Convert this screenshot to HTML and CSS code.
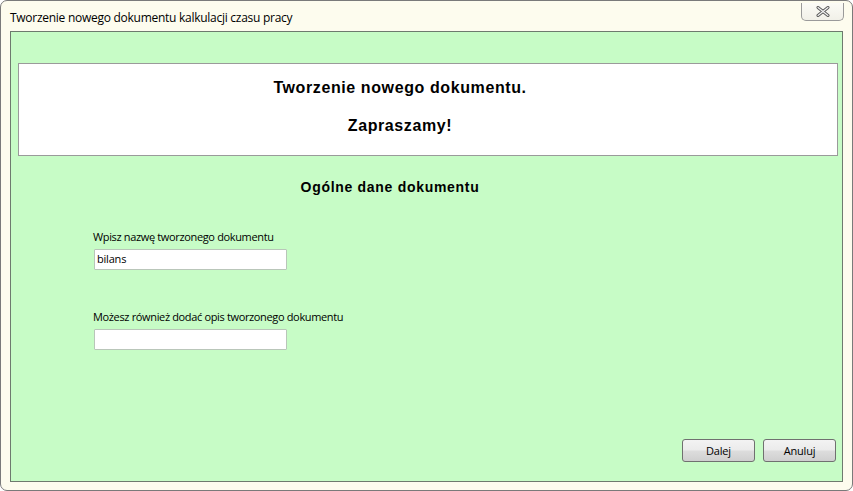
FILE: index.html
```html
<!DOCTYPE html>
<html lang="pl">
<head>
<meta charset="utf-8">
<link rel="stylesheet" href="styles.css">
</head>
<body>
<div class="window">
  <div class="titlebar">
    <span class="title">Tworzenie nowego dokumentu kalkulacji czasu pracy</span>
    <div class="close">
      <svg width="14" height="11" viewBox="0 0 14 11"><path d="M2 1.5 L12 9.5 M12 1.5 L2 9.5" stroke="#555" stroke-width="3" stroke-linecap="round"/><path d="M2 1.5 L12 9.5 M12 1.5 L2 9.5" stroke="#f4f4f4" stroke-width="1.2" stroke-linecap="round"/></svg>
    </div>
  </div>
  <div class="client">
    <div class="banner">
      <p class="banner-line">Tworzenie nowego dokumentu.</p>
      <p class="banner-line">Zapraszamy!</p>
    </div>
    <h2 class="section">Ogólne dane dokumentu</h2>
    <div class="form">
      <label class="field">
        <span class="label">Wpisz nazwę tworzonego dokumentu</span>
        <span class="input">bilans</span>
      </label>
      <label class="field second">
        <span class="label">Możesz również dodać opis tworzonego dokumentu</span>
        <span class="input"></span>
      </label>
    </div>
    <div class="buttons">
      <span class="btn">Dalej</span>
      <span class="btn">Anuluj</span>
    </div>
  </div>
</div>
</body>
</html>
```
FILE: styles.css
```css
html, body { margin: 0; padding: 0; }
body { width: 853px; height: 491px; background: #ffffff; overflow: hidden; }
.window {
  box-sizing: border-box;
  width: 853px; height: 491px;
  background: #fdfcee;
  border: 1px solid #7a7a7a;
  border-radius: 7px;
  display: flex; flex-direction: column;
  padding: 0 9px 8px 9px;
}
.titlebar {
  height: 30px;
  display: flex; align-items: flex-start; justify-content: space-between;
  font-family: "Open Sans", "Noto Sans", sans-serif;
  font-size: 12px;
  color: #000;
}
.title { margin-top: 8px; letter-spacing: -0.27px; }
.close {
  width: 43px; height: 18px; margin-top: 2px; margin-right: -1px;
  box-sizing: border-box;
  border: 1px solid #9a9a9a; border-top: none;
  border-radius: 0 0 5px 5px;
  background: linear-gradient(#fbfbf6, #f1f0e8);
  display: flex; align-items: center; justify-content: center;
}
.client {
  flex: 1;
  background: #c7fcc6;
  border: 1px solid #6e7a6e;
  display: flex; flex-direction: column;
  padding: 31px 4px 0 7px;
  position: relative;
}
.banner {
  height: 93px;
  box-sizing: border-box;
  background: #fff;
  border: 1px solid #9a9a9a;
  display: flex; flex-direction: column; align-items: center;
  padding-top: 14px; padding-right: 56px;
  font-family: "Liberation Sans", Arial, sans-serif;
  font-weight: bold; font-size: 16px;
}
.banner-line { margin: 0 0 19px 0; line-height: 19px; letter-spacing: 0.6px; }
.section {
  margin: 23px 0 0 0;
  text-align: center;
  padding-right: 76px;
  font-family: "Liberation Sans", Arial, sans-serif;
  font-weight: bold; font-size: 14px; line-height: 16px;
  letter-spacing: 0.7px;
}
.form { display: flex; flex-direction: column; padding-left: 76px; margin-top: 35px; }
.field { display: flex; flex-direction: column; }
.field.second { margin-top: 40px; }
.label {
  font-family: "Open Sans", "Noto Sans", sans-serif;
  font-size: 11px; line-height: 14px; letter-spacing: -0.35px;
  margin-left: -1px;
}
.input {
  margin-top: 5px;
  width: 193px; height: 21px; box-sizing: border-box;
  background: #fff;
  border: 1px solid #b9c6b9;
  border-radius: 1px;
  font-family: "Open Sans", "Noto Sans", sans-serif;
  font-size: 11px; line-height: 18px; padding-left: 2px;
  letter-spacing: -0.2px;
}
.buttons {
  margin-top: auto;
  display: flex; justify-content: flex-end; gap: 8px;
  padding-bottom: 19px; padding-right: 2px;
}
.btn {
  width: 73px; height: 23px; box-sizing: border-box;
  border: 1px solid #707070; border-radius: 3px;
  background: linear-gradient(#f3f3f3 0%, #ebebeb 48%, #dddddd 52%, #cfcfcf 100%);
  display: flex; align-items: center; justify-content: center;
  font-family: "Open Sans", "Noto Sans", sans-serif;
  font-size: 11px; letter-spacing: -0.2px;
}
```
